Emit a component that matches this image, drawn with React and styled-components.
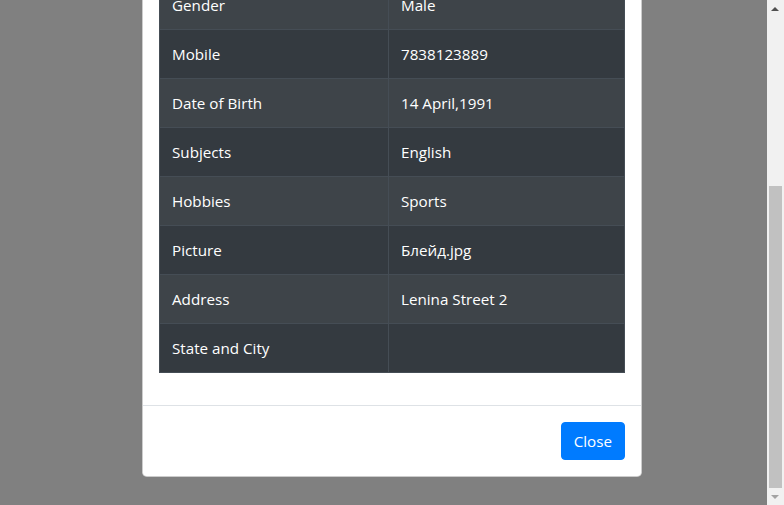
import React, { useLayoutEffect, useRef } from 'react';
import styled, { createGlobalStyle } from 'styled-components';

const GlobalStyle = createGlobalStyle`
    html, body {
        margin: 0;
        padding: 0;
        overflow: hidden;
    }
    body {
        font-family: "Open Sans", "Noto Sans", "Liberation Sans", sans-serif;
        font-size: 15.2px;
        line-height: 24px;
        color: #212529;
    }
`;

const Screen = styled.div`
    position: relative;
    width: 784px;
    height: 505px;
    overflow: hidden;
`;

const Backdrop = styled.div`
    height: 100%;
    overflow: hidden;
    background: #808080;
`;

const Dialog = styled.div`
    width: 500px;
    margin: 28px auto;
`;

const Content = styled.div`
    display: flex;
    flex-direction: column;
    background: #fff;
    border: 1px solid rgba(0, 0, 0, 0.2);
    border-radius: 4.8px;
`;

const Header = styled.div`
    padding: 16px;
    border-bottom: 1px solid #dee2e6;
`;

const Title = styled.h5`
    margin: 0;
    font-size: 20px;
    font-weight: 500;
    line-height: 30px;
`;

const Body = styled.div`
    padding: 16px;
`;

const Table = styled.table`
    width: 100%;
    margin-bottom: 16px;
    border-collapse: collapse;
    background: #343a40;
    color: #fff;
    border: 1px solid #454d55;
`;

const Row = styled.tr`
    background: ${p => (p.$striped ? 'rgba(255, 255, 255, 0.05)' : 'transparent')};
`;

const Cell = styled.td`
    padding: 12px;
    vertical-align: top;
    border: 1px solid #454d55;
    height: 24px;
    width: ${p => p.$w || 'auto'};
    font-weight: ${p => (p.$head ? 700 : 400)};
    text-align: left;
`;

const Footer = styled.div`
    display: flex;
    justify-content: flex-end;
    align-items: center;
    padding: 12px;
    border-top: 1px solid #dee2e6;
`;

const Button = styled.button`
    margin: 4px;
    padding: 6px 12px;
    font-family: inherit;
    font-size: 15.2px;
    line-height: 24px;
    color: #fff;
    background: #007bff;
    border: 1px solid #007bff;
    border-radius: 4px;
    cursor: pointer;
`;

const ScrollBar = styled.div`
    position: absolute;
    top: 0;
    right: 0;
    width: 17px;
    height: 100%;
    background: #f1f1f1;
`;

const Thumb = styled.div`
    position: absolute;
    left: 2px;
    right: 2px;
    top: 186px;
    bottom: 17px;
    background: #c1c1c1;
`;

const Arrow = styled.div`
    position: absolute;
    left: 4px;
    width: 0;
    height: 0;
    border-left: 4.5px solid transparent;
    border-right: 4.5px solid transparent;
    ${p => (p.$down
        ? 'bottom: 6px; border-top: 4px solid #a3a3a3;'
        : 'top: 7px; border-bottom: 4px solid #505050;')}
`;

const rows = [
    ['Student Name', 'Ivan Petrov'],
    ['Student Email', 'ivan.petrov@example.com'],
    ['Gender', 'Male'],
    ['Mobile', '7838123889'],
    ['Date of Birth', '14 April,1991'],
    ['Subjects', 'English'],
    ['Hobbies', 'Sports'],
    ['Picture', 'Блейд.jpg'],
    ['Address', 'Lenina Street 2'],
    ['State and City', ''],
];

export default function App() {
    const ref = useRef(null);

    useLayoutEffect(() => {
        // page is shown scrolled all the way down
        if (ref.current) ref.current.scrollTop = ref.current.scrollHeight;
    }, []);

    return (
        <Screen>
            <GlobalStyle />
            <Backdrop ref={ref}>
                <Dialog>
                    <Content>
                        <Header>
                            <Title>Thanks for submitting the form</Title>
                        </Header>
                        <Body>
                            <Table>
                                <thead>
                                    <tr>
                                        <Cell as="th" $head $w="204px">Label</Cell>
                                        <Cell as="th" $head>Values</Cell>
                                    </tr>
                                </thead>
                                <tbody>
                                    {rows.map(([label, value], i) => (
                                        <Row key={label} $striped={i % 2 === 0}>
                                            <Cell $w="204px">{label}</Cell>
                                            <Cell>{value}</Cell>
                                        </Row>
                                    ))}
                                </tbody>
                            </Table>
                        </Body>
                        <Footer>
                            <Button>Close</Button>
                        </Footer>
                    </Content>
                </Dialog>
            </Backdrop>
            <ScrollBar>
                <Arrow />
                <Thumb />
                <Arrow $down />
            </ScrollBar>
        </Screen>
    );
}
